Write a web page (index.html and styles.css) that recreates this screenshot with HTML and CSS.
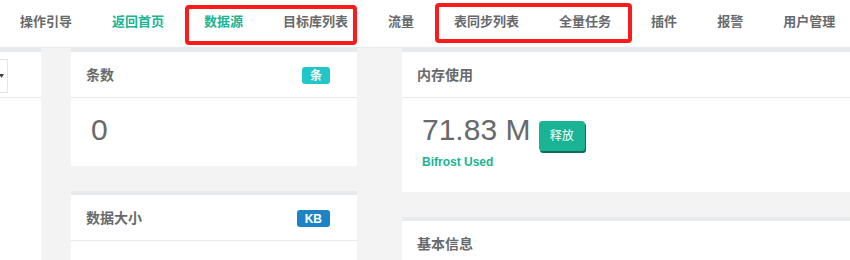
FILE: index.html
```html
<!DOCTYPE html>
<html lang="zh-CN">
<head>
<meta charset="utf-8">
<title>Bifrost</title>
<link rel="stylesheet" href="styles.css">
</head>
<body>
<div class="page">
  <header class="topnav">
    <ul class="nav">
      <li><a class="nav-link">操作引导</a></li>
      <li><a class="nav-link green">返回首页</a></li>
      <li><a class="nav-link green">数据源</a></li>
      <li><a class="nav-link">目标库列表</a></li>
      <li><a class="nav-link">流量</a></li>
      <li><a class="nav-link">表同步列表</a></li>
      <li><a class="nav-link">全量任务</a></li>
      <li><a class="nav-link">插件</a></li>
      <li><a class="nav-link">报警</a></li>
      <li><a class="nav-link">用户管理</a></li>
    </ul>
    <div class="mark mark-one"></div>
    <div class="mark mark-two"></div>
  </header>

  <main class="content">
    <section class="col col-a">
      <div class="card card-fill">
        <div class="card-title title-end">
          <div class="select">
            <svg class="caret" width="5" height="4" viewBox="0 0 5 4"><path d="M0 0H5L2.5 4Z" fill="#444"/></svg>
          </div>
        </div>
        <div class="card-body"></div>
      </div>
    </section>

    <section class="col col-b">
      <div class="card">
        <div class="card-title">
          <h5>条数</h5>
          <span class="label label-info">条</span>
        </div>
        <div class="card-body">
          <h1 class="big">0</h1>
        </div>
      </div>
      <div class="card card-fill">
        <div class="card-title">
          <h5>数据大小</h5>
          <span class="label label-blue">KB</span>
        </div>
        <div class="card-body"></div>
      </div>
    </section>

    <section class="col col-c">
      <div class="card">
        <div class="card-title">
          <h5>内存使用</h5>
        </div>
        <div class="card-body mem-body">
          <h1 class="big">71.83 M <button class="btn">释放</button></h1>
          <div class="used">Bifrost Used</div>
        </div>
      </div>
      <div class="card card-fill">
        <div class="card-title">
          <h5>基本信息</h5>
        </div>
        <div class="card-body"></div>
      </div>
    </section>
  </main>
</div>
</body>
</html>
```

FILE: styles.css
```css
html, body {
  margin: 0;
  padding: 0;
}

body {
  font-family: "Liberation Sans", "Noto Sans CJK SC", sans-serif;
  color: #676a6c;
  background: #f3f3f4;
}

.page {
  width: 850px;
  height: 260px;
  overflow: hidden;
  display: flex;
  flex-direction: column;
}

.topnav {
  position: relative;
  height: 48px;
  box-sizing: border-box;
  background: #ffffff;
  border-bottom: 1px solid #e7eaec;
  flex-shrink: 0;
}

.nav {
  list-style: none;
  margin: 0;
  padding: 0;
  display: flex;
}

.nav-link {
  display: block;
  padding: 13px 20px 16px;
  line-height: 18px;
  font-size: 13px;
  font-weight: 700;
  color: #676a6c;
  white-space: nowrap;
}

.nav-link.green {
  color: #1ab394;
}

.mark {
  position: absolute;
  box-sizing: border-box;
  border: 4px solid #fb1b1b;
  border-radius: 4px;
}

.mark-one {
  left: 185px;
  top: 5px;
  width: 172px;
  height: 40px;
}

.mark-two {
  left: 435px;
  top: 3px;
  width: 197px;
  height: 40px;
}

.content {
  flex: 1;
  display: flex;
  align-items: flex-start;
  min-height: 0;
}

.col {
  display: flex;
  flex-direction: column;
  gap: 25px;
  height: 100%;
}

.col-a {
  width: 41px;
  overflow: hidden;
  flex-shrink: 0;
}

.col-b {
  width: 286px;
  margin-left: 30px;
  flex-shrink: 0;
}

.col-c {
  flex: 1;
  margin-left: 45px;
}

.card {
  background: #ffffff;
  flex-shrink: 0;
}

.card-fill {
  flex: 1;
}

.card-title {
  height: 50px;
  box-sizing: border-box;
  border-top: 4px solid #e7eaec;
  border-bottom: 1px solid #e7eaec;
  padding: 0 27px 0 15px;
  display: flex;
  align-items: center;
  justify-content: space-between;
}

.card-title h5 {
  margin: 0;
  font-size: 14px;
  font-weight: 700;
  line-height: 20px;
  color: #676a6c;
}

.title-end {
  justify-content: flex-end;
  padding: 0 33px 0 0;
}

.select {
  width: 120px;
  height: 34px;
  margin-top: 2px;
  flex-shrink: 0;
  box-sizing: border-box;
  border: 1px solid #e5e6e7;
  display: flex;
  align-items: center;
  justify-content: flex-end;
  padding-right: 3px;
}

.caret {
  display: block;
}

.card-body {
  padding: 15px 20px 20px;
}

.mem-body {
  padding-bottom: 21px;
}

.big {
  margin: 0;
  font-size: 30px;
  line-height: 33px;
  font-weight: 400;
  color: #676a6c;
}

.label {
  display: inline-block;
  font-size: 12px;
  font-weight: 700;
  line-height: 12px;
  padding: 3px 8px 2px;
  border-radius: 3px;
  color: #ffffff;
  margin-top: 2px;
}

.label-info {
  background: #23c6c8;
}

.label-blue {
  background: #1c84c6;
}

.btn {
  font-family: "Liberation Sans", "Noto Sans CJK SC", sans-serif;
  font-size: 12px;
  line-height: 18px;
  padding: 5px 10px;
  border: 1px solid #1ab394;
  border-radius: 3px;
  background: #1ab394;
  color: #ffffff;
  box-shadow: 1px 2px 0 #0f6e5b;
  vertical-align: baseline;
}

.used {
  margin-top: 3px;
  font-size: 12px;
  font-weight: 700;
  line-height: 17px;
  color: #1ab394;
}
```
